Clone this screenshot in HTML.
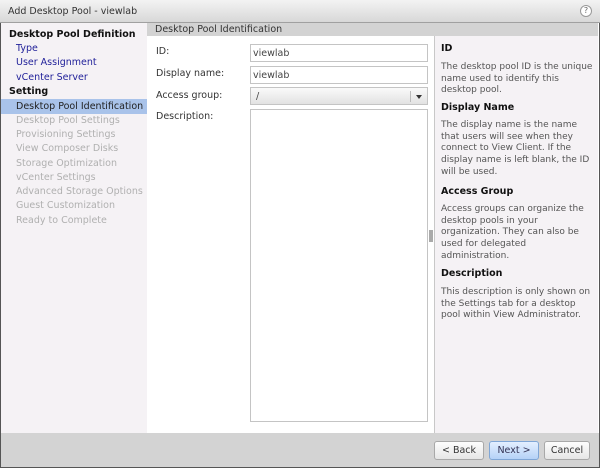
<!DOCTYPE html>
<html><head><style>
*{margin:0;padding:0;box-sizing:border-box}
body{width:600px;height:468px;overflow:hidden;font-family:"DejaVu Sans","Liberation Sans",sans-serif;font-size:9.5px;background:#fff;position:relative}
.a{position:absolute;white-space:nowrap;line-height:12px}
#win{position:absolute;left:0;top:0;width:600px;height:468px;border:1px solid #555;border-top:1px solid #888}
#title{position:absolute;left:0;top:0;width:600px;height:23px;background:linear-gradient(#f3f3f3,#d8d8d8);border-bottom:1px solid #a0a0a0}
#nav{position:absolute;left:1px;top:23px;width:146px;height:410px;background:#f5f2f5}
#hdr{position:absolute;left:147px;top:23px;width:451px;height:13px;background:#d3d3d3}
#help{position:absolute;left:434px;top:36px;width:164px;height:397px;background:#f5f2f5;border-left:1px solid #c8c8c8}
#foot{position:absolute;left:1px;top:433px;width:598px;height:34px;background:#d3d3d3}
.in{position:absolute;left:250px;width:178px;background:#fff;border:1px solid #c4c4c4}
.btn{position:absolute;top:441px;height:19px;border:1px solid #a8a8a8;border-radius:3px;background:linear-gradient(#fdfdfd,#e6e6e6);text-align:center;line-height:17px;color:#333}
.n{color:#22229a}.g{color:#b0b0b0}.h{font-weight:bold;color:#111}.t{color:#555;font-size:9px}
</style></head><body>
<div id="win"></div>
<div id="title"></div>
<div class="a" style="left:8px;top:6px;color:#333">Add Desktop Pool - viewlab</div>
<div style="position:absolute;left:580px;top:5px;width:12px;height:12px;border-radius:50%;border:1px solid #999;background:#fff;font-size:8px;line-height:10px;text-align:center;color:#666">?</div>
<div id="nav"></div>
<div style="position:absolute;left:1px;top:99px;width:146px;height:15px;background:#a9c3ea"></div>
<div class="a h" style="left:9px;top:29px">Desktop Pool Definition</div>
<div class="a n" style="left:16px;top:43px">Type</div>
<div class="a n" style="left:16px;top:57px">User Assignment</div>
<div class="a n" style="left:16px;top:72px">vCenter Server</div>
<div class="a h" style="left:9px;top:86px">Setting</div>
<div class="a" style="left:16px;top:101px;color:#222">Desktop Pool Identification</div>
<div class="a g" style="left:16px;top:115px">Desktop Pool Settings</div>
<div class="a g" style="left:16px;top:129px">Provisioning Settings</div>
<div class="a g" style="left:16px;top:143px">View Composer Disks</div>
<div class="a g" style="left:16px;top:158px">Storage Optimization</div>
<div class="a g" style="left:16px;top:172px">vCenter Settings</div>
<div class="a g" style="left:16px;top:186px">Advanced Storage Options</div>
<div class="a g" style="left:16px;top:200px">Guest Customization</div>
<div class="a g" style="left:16px;top:215px">Ready to Complete</div>
<div id="hdr"></div>
<div class="a" style="left:155px;top:24px;color:#333">Desktop Pool Identification</div>
<div class="a" style="left:156px;top:46px;color:#333">ID:</div>
<div class="a" style="left:156px;top:68px;color:#333">Display name:</div>
<div class="a" style="left:156px;top:90px;color:#333">Access group:</div>
<div class="a" style="left:156px;top:111px;color:#333">Description:</div>
<div class="in" style="top:44px;height:18px"><span class="a" style="left:2px;top:3px;color:#444">viewlab</span></div>
<div class="in" style="top:66px;height:18px"><span class="a" style="left:2px;top:3px;color:#444">viewlab</span></div>
<div class="in" style="top:87px;height:18px;background:linear-gradient(#fafafa,#e2e2e2)"><span class="a" style="left:5px;top:3px;color:#444">/</span><span style="position:absolute;left:159px;top:3px;width:1px;height:11px;background:#bbb"></span><span style="position:absolute;left:165px;top:7px;border-left:3px solid transparent;border-right:3px solid transparent;border-top:4px solid #333"></span></div>
<div class="in" style="top:109px;height:313px"></div>
<div style="position:absolute;left:429px;top:230px;width:4px;height:12px;background:#aaa"></div>
<div id="help"></div>
<div class="a h" style="left:441px;top:43px">ID</div>
<div class="a t" style="left:441px;top:62px;line-height:11.7px">The desktop pool ID is the unique<br>name used to identify this<br>desktop pool.</div>
<div class="a h" style="left:441px;top:102px">Display Name</div>
<div class="a t" style="left:441px;top:120px;line-height:11.7px">The display name is the name<br>that users will see when they<br>connect to View Client. If the<br>display name is left blank, the ID<br>will be used.</div>
<div class="a h" style="left:441px;top:186px">Access Group</div>
<div class="a t" style="left:441px;top:204px;line-height:11.7px">Access groups can organize the<br>desktop pools in your<br>organization. They can also be<br>used for delegated<br>administration.</div>
<div class="a h" style="left:441px;top:268px">Description</div>
<div class="a t" style="left:441px;top:287px;line-height:11.7px">This description is only shown on<br>the Settings tab for a desktop<br>pool within View Administrator.</div>
<div id="foot"></div>
<div class="btn" style="left:434px;width:50px">&lt; Back</div>
<div class="btn" style="left:489px;width:50px;background:linear-gradient(#e3efff,#b5d2f7);border-color:#7fa6d6;color:#335">Next &gt;</div>
<div class="btn" style="left:544px;width:46px">Cancel</div>
</body></html>
